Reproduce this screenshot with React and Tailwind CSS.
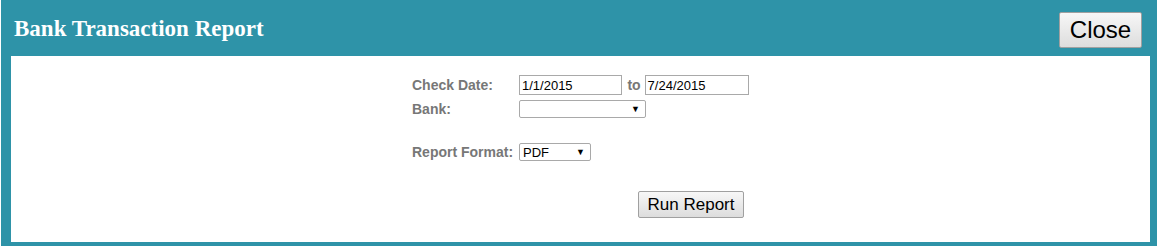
export default function App() {
  const label = "w-[107px] shrink-0 text-[14px] font-bold text-[#777777]";
  const arial = { fontFamily: '"Liberation Sans", Arial, sans-serif' };
  return (
    <div className="w-[1158px] h-[247px] bg-white" style={arial}>
      <div className="ml-[1px] w-[1156px] h-[246px] bg-[#2e93a8] flex flex-col pl-[10px] pr-[7px] pb-[4px]">
        <div className="h-[56px] flex items-center justify-between">
          <div
            className="pl-[3px] text-[23px] font-bold text-white leading-none"
            style={{ fontFamily: '"Liberation Serif", "Times New Roman", serif' }}
          >
            Bank Transaction Report
          </div>
          <button className="mr-[8px] mt-[4px] w-[83px] h-[36px] border border-[#a0a0a0] rounded-[2px] bg-gradient-to-b from-[#f7f7f7] to-[#dddddd] text-[24px] text-black leading-none flex items-center justify-center">
            Close
          </button>
        </div>
        <div className="flex-1 bg-white flex justify-center pt-[19px]">
          <div className="w-[337px] flex flex-col">
            <div className="flex items-center h-[20px]">
              <div className={label}>Check Date:</div>
              <div className="w-[104px] h-[20px] border border-[#a9a9a9] text-[13px] text-black px-[2px] flex items-center leading-none">
                1/1/2015
              </div>
              <div className="ml-[5px] mr-[4px] text-[14px] font-bold text-[#777777]">to</div>
              <div className="w-[105px] h-[20px] border border-[#a9a9a9] text-[13px] text-black px-[2px] flex items-center leading-none">
                7/24/2015
              </div>
            </div>
            <div className="flex items-center h-[18px] mt-[5px]">
              <div className={label}>Bank:</div>
              <div className="w-[127px] h-[18px] border border-[#a9a9a9] rounded-[2px] flex items-center justify-end pr-[5px] text-[9px] text-black leading-none">
                ▼
              </div>
            </div>
            <div className="flex items-center h-[18px] mt-[25px]">
              <div className={label}>Report Format:</div>
              <div className="w-[72px] h-[18px] border border-[#a9a9a9] rounded-[2px] flex items-center justify-between pl-[3px] pr-[5px] text-[13px] text-black leading-none">
                <span>PDF</span>
                <span className="text-[9px]">▼</span>
              </div>
            </div>
            <div className="flex mt-[30px]">
              <button className="ml-[226px] w-[106px] h-[27px] border border-[#a0a0a0] rounded-[2px] bg-gradient-to-b from-[#f7f7f7] to-[#dddddd] text-[17px] text-black leading-none flex items-center justify-center">
                Run Report
              </button>
            </div>
          </div>
        </div>
      </div>
    </div>
  );
}
